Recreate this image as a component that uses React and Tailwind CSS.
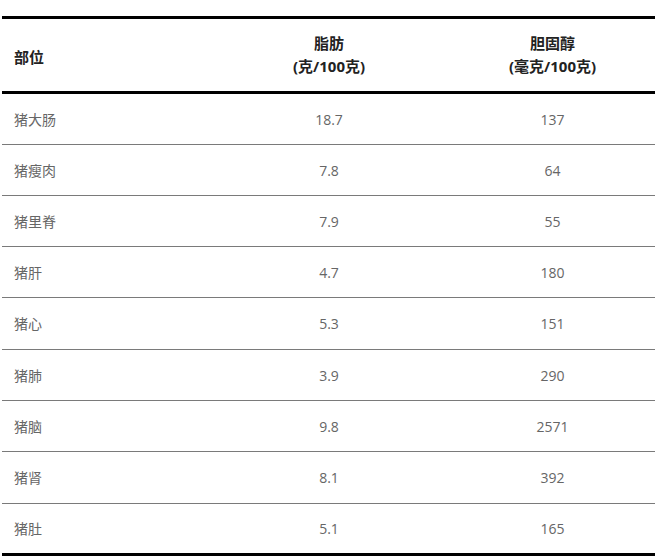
const rows = [
  ["猪大肠", "18.7", "137"],
  ["猪瘦肉", "7.8", "64"],
  ["猪里脊", "7.9", "55"],
  ["猪肝", "4.7", "180"],
  ["猪心", "5.3", "151"],
  ["猪肺", "3.9", "290"],
  ["猪脑", "9.8", "2571"],
  ["猪肾", "8.1", "392"],
  ["猪肚", "5.1", "165"],
];

export default function App() {
  return (
    <div className="w-[660px] h-[557px] bg-white pt-4 pl-[2px] font-['Open_Sans','Noto_Sans_CJK_SC',sans-serif]">
      <table className="w-[653px] border-collapse table-fixed">
        <colgroup>
          <col className="w-[206px]" />
          <col className="w-[242px]" />
          <col className="w-[205px]" />
        </colgroup>
        <thead>
          <tr className="border-t-[3px] border-b-[3px] border-black h-[75px]">
            <th className="text-left pl-3 text-[15px] font-bold text-[#222] leading-[23px] pt-1 align-middle">部位</th>
            <th className="text-center text-[15px] font-bold text-[#222] leading-[23px] align-middle">
              脂肪<br />(克/100克)
            </th>
            <th className="text-center text-[15px] font-bold text-[#222] leading-[23px] align-middle">
              胆固醇<br />(毫克/100克)
            </th>
          </tr>
        </thead>
        <tbody>
          {rows.map((r, i) => (
            <tr
              key={i}
              className={
                i === 0
                  ? "h-[52px] border-b border-[#7a7a7a]"
                  : i === rows.length - 1
                  ? "h-[51px] border-b-[3px] border-black"
                  : i === 4 || i === 7
                  ? "h-[52px] border-b border-[#7a7a7a]"
                  : "h-[51px] border-b border-[#7a7a7a]"
              }
            >
              <td className="pl-3 text-[14px] text-[#666] align-middle">{r[0]}</td>
              <td className="text-center text-[14px] text-[#666] align-middle">{r[1]}</td>
              <td className="text-center text-[14px] text-[#666] align-middle">{r[2]}</td>
            </tr>
          ))}
        </tbody>
      </table>
    </div>
  );
}
